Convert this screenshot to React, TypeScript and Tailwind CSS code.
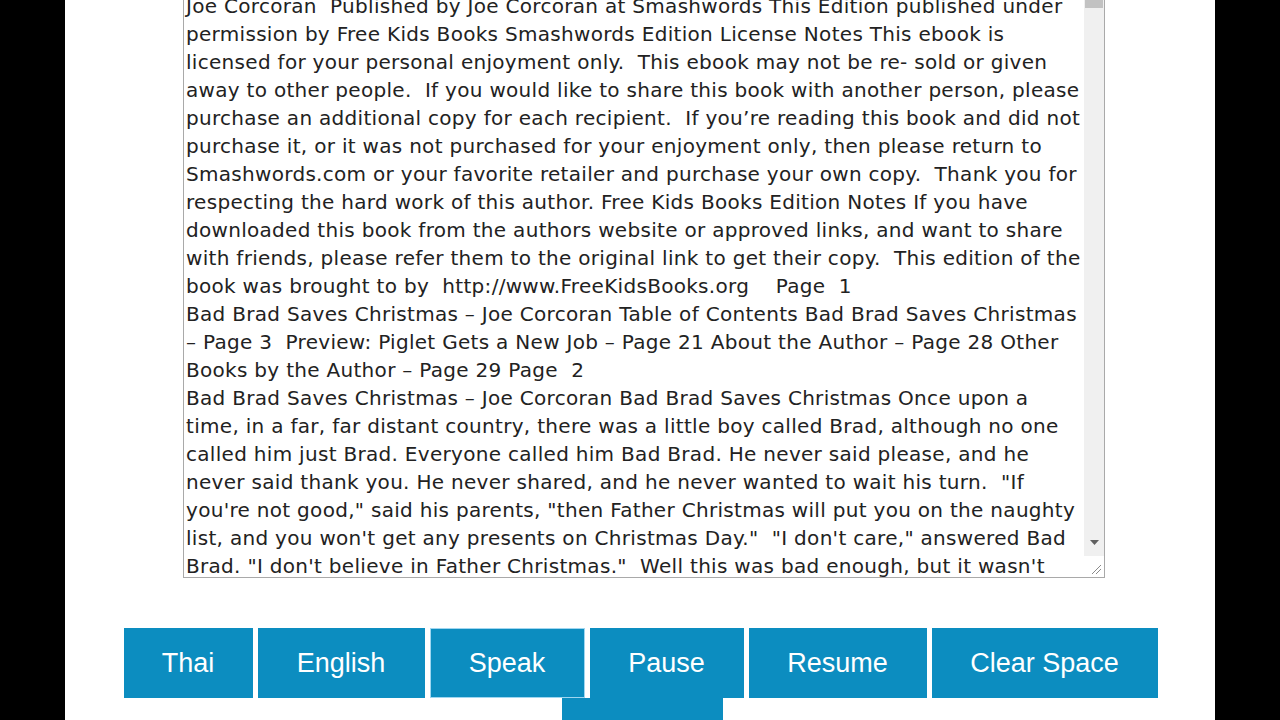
import React from "react";

const lines = [
  "Joe Corcoran  Published by Joe Corcoran at Smashwords This Edition published under",
  "permission by Free Kids Books Smashwords Edition License Notes This ebook is",
  "licensed for your personal enjoyment only.  This ebook may not be re- sold or given",
  "away to other people.  If you would like to share this book with another person, please",
  "purchase an additional copy for each recipient.  If you\u2019re reading this book and did not",
  "purchase it, or it was not purchased for your enjoyment only, then please return to",
  "Smashwords.com or your favorite retailer and purchase your own copy.  Thank you for",
  "respecting the hard work of this author. Free Kids Books Edition Notes If you have",
  "downloaded this book from the authors website or approved links, and want to share",
  "with friends, please refer them to the original link to get their copy.  This edition of the",
  "book was brought to by  http://www.FreeKidsBooks.org    Page  1",
  "Bad Brad Saves Christmas \u2013 Joe Corcoran Table of Contents Bad Brad Saves Christmas",
  "\u2013 Page 3  Preview: Piglet Gets a New Job \u2013 Page 21 About the Author \u2013 Page 28 Other",
  "Books by the Author \u2013 Page 29 Page  2",
  "Bad Brad Saves Christmas \u2013 Joe Corcoran Bad Brad Saves Christmas Once upon a",
  "time, in a far, far distant country, there was a little boy called Brad, although no one",
  "called him just Brad. Everyone called him Bad Brad. He never said please, and he",
  "never said thank you. He never shared, and he never wanted to wait his turn.  \"If",
  "you're not good,\" said his parents, \"then Father Christmas will put you on the naughty",
  "list, and you won't get any presents on Christmas Day.\"  \"I don't care,\" answered Bad",
  "Brad. \"I don't believe in Father Christmas.\"  Well this was bad enough, but it wasn't",
  "enough for Brad. He wanted to be even worse.",
];

const buttons = [
  { label: "Thai", w: "w-[129px]" },
  { label: "English", w: "w-[167px]" },
  { label: "Speak", w: "w-[155px]", focused: true },
  { label: "Pause", w: "w-[154px]" },
  { label: "Resume", w: "w-[178px]" },
  { label: "Clear Space", w: "w-[226px]" },
  { label: "Stop", w: "w-[161px] ml-[4px]" },
];

function Scrollbar() {
  return (
    <div className="flex w-[20px] flex-col">
      <div className="flex flex-1 flex-col bg-[#f0f0f0] px-[1px]">
        <div className="h-[8px] bg-[#c2c2c2]" />
        <div className="flex-1" />
        <div className="mb-[5px] flex h-[17px] items-center justify-center">
          <svg width="9" height="5" viewBox="0 0 9 5">
            <path d="M0 0 L9 0 L4.5 5 Z" fill="#606060" />
          </svg>
        </div>
      </div>
      <div className="flex h-[21px] items-end justify-end bg-white pb-[2px] pr-[2px]">
        <svg width="11" height="11" viewBox="0 0 11 11">
          <path d="M1 10 L10 1 M5 10 L10 5" stroke="#8a8a8a" strokeWidth="1" />
        </svg>
      </div>
    </div>
  );
}

export default function App() {
  return (
    <div className="flex h-[720px] w-full justify-center overflow-hidden bg-black">
      <div className="flex w-[1150px] flex-col bg-white">
        {/* textarea */}
        <div className="ml-[118px] flex h-[578px] w-[922px] border border-t-0 border-[#a9a9a9] bg-white">
          <div className="flex-1 overflow-hidden pl-[2px]">
            <div
              className="-mt-[8px] whitespace-pre text-[20px] leading-[28px] tracking-[0.3px] text-[#222]"
              style={{ fontFamily: '"DejaVu Sans", Verdana, sans-serif' }}
            >
              {lines.map((l, i) => (
                <div key={i}>{l}</div>
              ))}
            </div>
          </div>
          <Scrollbar />
        </div>

        {/* buttons */}
        <div className="mt-[50px] flex flex-wrap justify-center gap-x-[5px] pl-[1px]">
          {buttons.map((b) => (
            <button
              key={b.label}
              className={`${b.w} h-[70px] bg-[#0c8dc0] text-[27px] text-white ${
                b.focused ? "border border-[#9fd6f0]" : ""
              }`}
              style={{ fontFamily: '"Liberation Sans", Arial, sans-serif' }}
            >
              {b.label}
            </button>
          ))}
        </div>
      </div>
    </div>
  );
}
